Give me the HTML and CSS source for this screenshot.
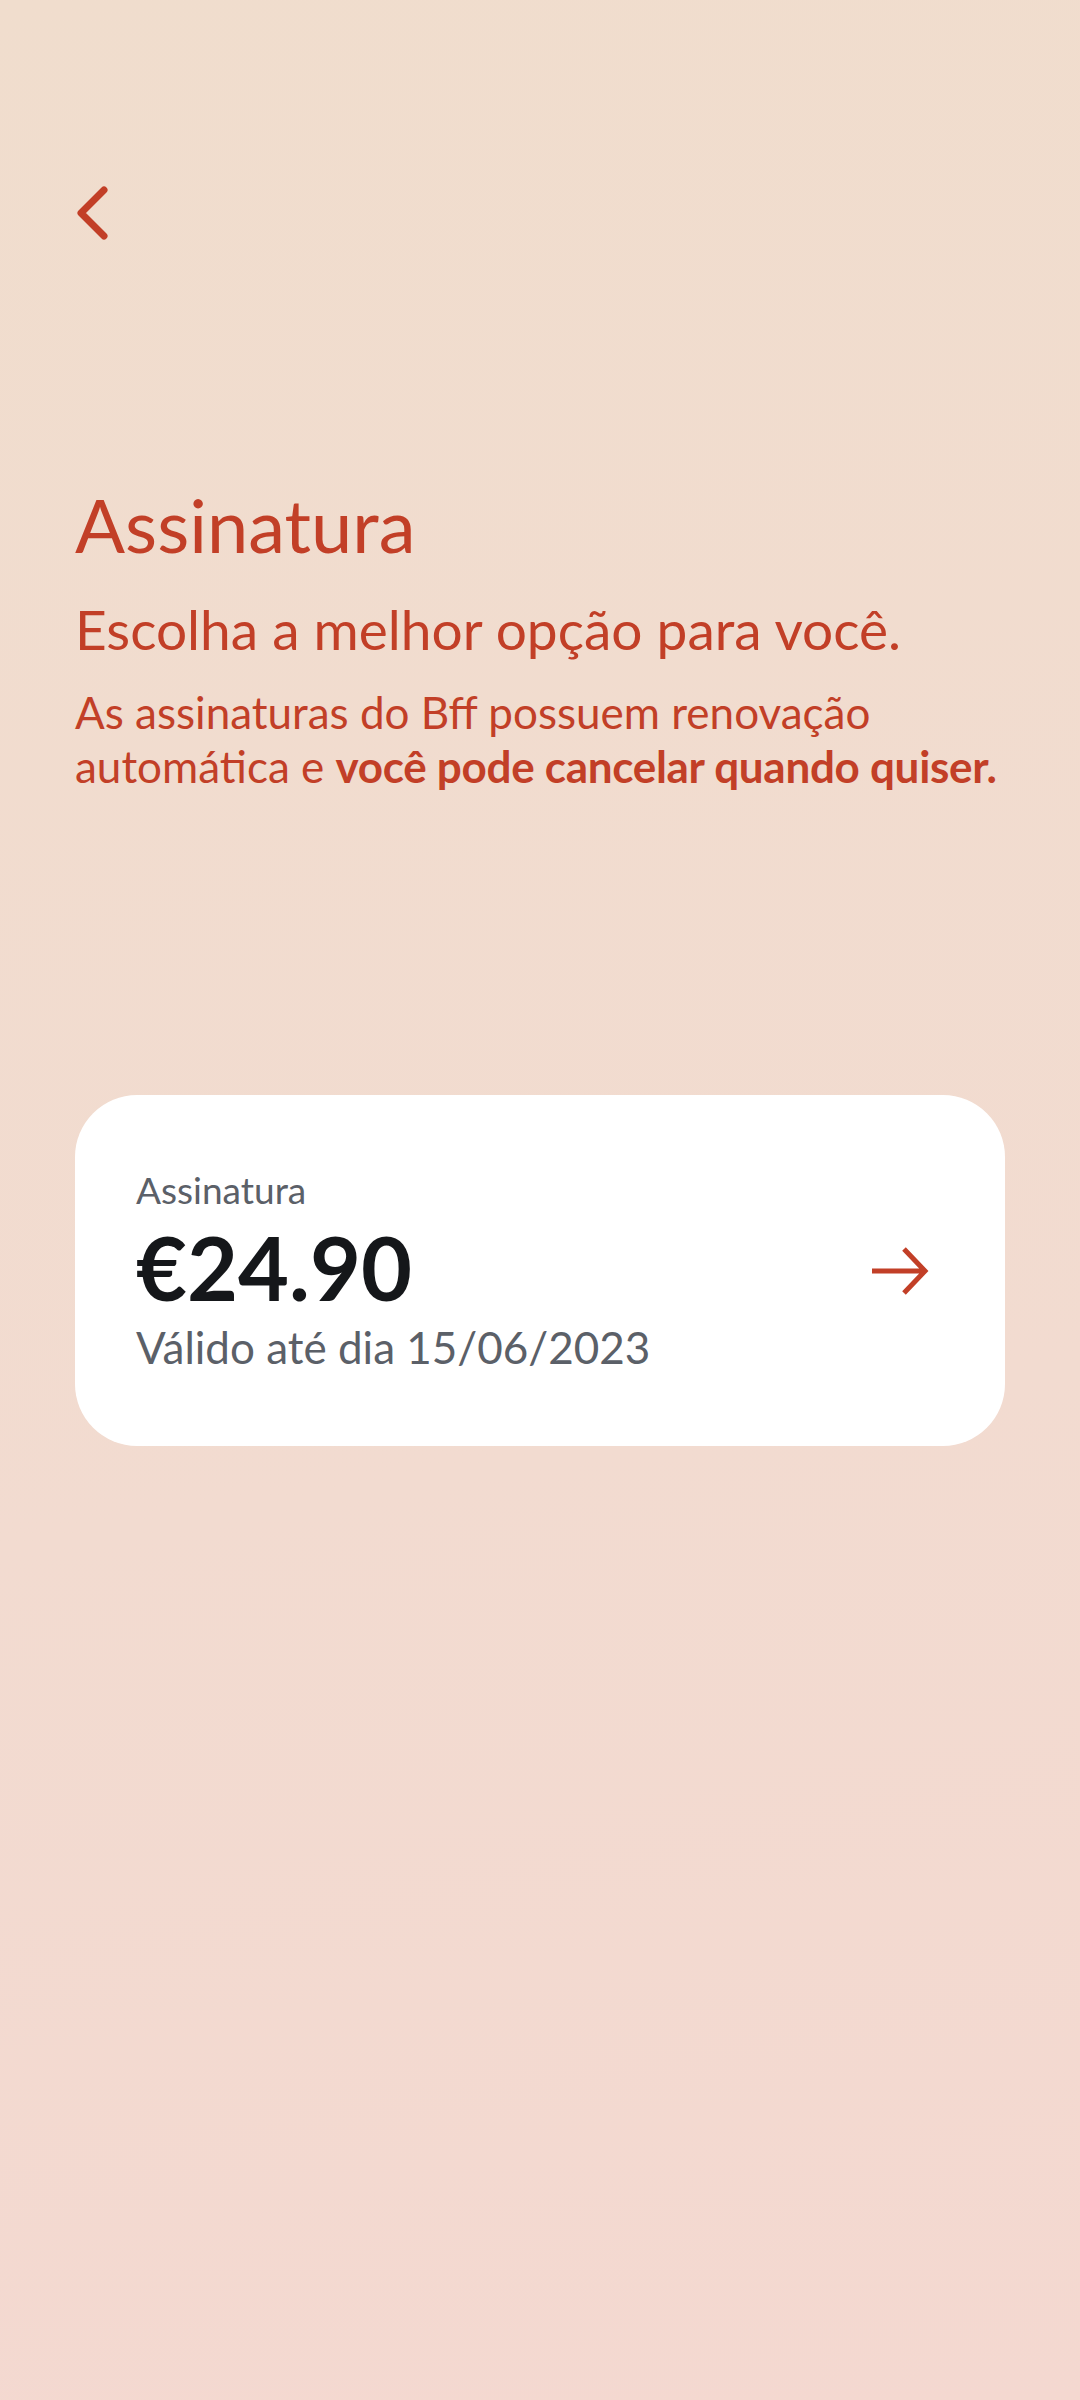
FILE: index.html
```html
<!DOCTYPE html>
<html lang="pt-BR">
<head>
    <meta charset="UTF-8">
    <meta name="viewport" content="width=device-width, initial-scale=1.0">
    <title>Assinatura</title>
    <link rel="stylesheet" href="styles.css">
</head>
<body>
    <div class="page">
        <header class="topbar">
            <button class="back" aria-label="Voltar">
                <svg width="40" height="60" viewBox="0 0 40 60">
                    <path d="M29 5 L6 28 L29 51" fill="none" stroke="#c23f27" stroke-width="7" stroke-linecap="round" stroke-linejoin="round"/>
                </svg>
            </button>
        </header>

        <section class="intro">
            <h1>Assinatura</h1>
            <h2>Escolha a melhor opção para você.</h2>
            <p>As assinaturas do Bff possuem renovação automática e <strong>você pode cancelar quando quiser.</strong></p>
        </section>

        <div class="plan-card">
            <div class="plan-info">
                <span class="plan-label">Assinatura</span>
                <span class="plan-price">€24.90</span>
                <span class="plan-date">Válido até dia 15/06/2023</span>
            </div>
            <svg class="plan-arrow" width="60" height="60" viewBox="0 0 60 60">
                <path d="M2 30 H54 M34 8 L55 30 L34 52" fill="none" stroke="#c23f27" stroke-width="5"/>
            </svg>
        </div>
    </div>
</body>
</html>
```

FILE: styles.css
```css
* {
    margin: 0;
    padding: 0;
    box-sizing: border-box;
}
body {
    font-family: Lato, "Noto Sans", sans-serif;
    background: linear-gradient(170deg, #f0ddcd 0%, #f2dbd0 60%, #f4d8d0 100%);
    min-height: 2400px;
    color: #c23f27;
}
.page {
    padding: 0 75px;
}
.topbar {
    padding-top: 185px;
}
.back {
    background: none;
    border: none;
    display: block;
    width: 40px;
    height: 60px;
    cursor: pointer;
}
.back svg {
    display: block;
}
.intro {
    margin-top: 236px;
}
.intro h1 {
    font-size: 74px;
    font-weight: 400;
    line-height: 1.2;
}
.intro h2 {
    margin-top: 26px;
    font-size: 55px;
    font-weight: 400;
    line-height: 1.2;
}
.intro p {
    margin-top: 23px;
    margin-right: -40px;
    font-size: 44px;
    line-height: 54px;
}
.intro strong {
    font-weight: 700;
    letter-spacing: -0.3px;
}
.plan-card {
    margin-top: 302px;
    background: #fff;
    border-radius: 62px;
    padding: 73px 75px 72px 61px;
    display: flex;
    align-items: center;
    justify-content: space-between;
}
.plan-info {
    display: flex;
    flex-direction: column;
}
.plan-label {
    font-size: 37px;
    line-height: 1.2;
    color: #5b6068;
}
.plan-price {
    margin-top: 7px;
    font-size: 88px;
    line-height: 1.1;
    font-weight: 700;
    color: #15171a;
}
.plan-date {
    margin-top: 5px;
    font-size: 44px;
    line-height: 1.2;
    color: #5b6068;
}
```
